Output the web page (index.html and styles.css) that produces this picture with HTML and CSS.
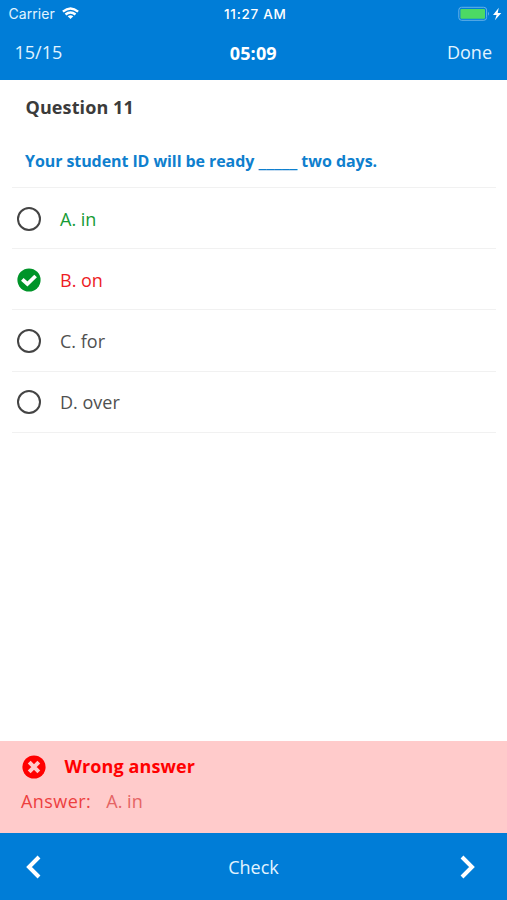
FILE: index.html
```html
<!DOCTYPE html>
<html lang="en">
<head>
<meta charset="utf-8">
<title>Question 11</title>
<link rel="stylesheet" href="styles.css">
</head>
<body>
<div class="app">
  <header class="top">
    <div class="status">
      <div class="carrier"><span>Carrier</span>
        <svg class="wifi" viewBox="0 0 17 12" width="17" height="12" fill="none" stroke="#fff" stroke-width="2.400"><path d="M.9 4.600Q8.500-1.800 16.100 4.600M3.500 7.500Q8.500 3.300 13.500 7.500"/><path d="M5.700 9.300Q8.500 7 11.300 9.300L8.500 12Z" fill="#fff" stroke="none"/></svg>
      </div>
      <div class="clock">11:27 AM</div>
      <div class="power">
        <svg viewBox="0 0 44 16" width="44" height="16"><rect x=".8" y="1.300" width="27.800" height="13" rx="2.800" fill="none" stroke="#65b1e9"/><rect x="2.400" y="2.900" width="24.600" height="9.800" rx="1" fill="#4cd964"/><path d="M30 5.800Q32 7.800 30 9.800Z" fill="#65b1e9"/><path d="M40.800 1.800L35 8.900H38.600L36.900 14.200L43.300 7H39.700Z" fill="#fff"/></svg>
      </div>
    </div>
    <nav class="nav"><span class="count">15/15</span><strong class="timer">05:09</strong><span class="done">Done</span></nav>
  </header>
  <main class="content">
    <h1 class="title">Question 11</h1>
    <p class="prompt"><span class="lead">Your student ID will be ready</span> <span class="blank">_____</span> two days.</p>
    <ul class="options">
      <li class="option correct"><span class="radio"></span><span class="label">A. in</span></li>
      <li class="option wrong"><svg class="check" viewBox="0 0 24 24" width="24" height="24"><circle cx="12" cy="12" r="11.600" fill="#009429"/><path d="M5.300 11.400L10.400 16L18.600 8" fill="none" stroke="#fff" stroke-width="3.800"/></svg><span class="label">B. on</span></li>
      <li class="option"><span class="radio"></span><span class="label">C. for</span></li>
      <li class="option"><span class="radio"></span><span class="label">D. over</span></li>
    </ul>
  </main>
  <section class="result">
    <div class="verdict"><svg viewBox="0 0 24 24" width="24" height="24"><circle cx="12" cy="12" r="11.600" fill="#f00"/><path d="M7.200 7.200L16.800 16.800M16.800 7.200L7.200 16.800" stroke="#ffcbcb" stroke-width="4"/></svg><strong class="verdict-text">Wrong answer</strong></div>
    <div class="answer"><span class="answer-key">Answer:</span><span class="answer-value">A. in</span></div>
  </section>
  <footer class="bottom">
    <svg viewBox="0 0 16 24" width="16" height="24" fill="none" stroke="#fff" stroke-width="4"><path d="M14 2L4 12L14 22"/></svg>
    <span class="action">Check</span>
    <svg class="next" viewBox="0 0 16 24" width="16" height="24" fill="none" stroke="#fff" stroke-width="4"><path d="M2 2L12 12L2 22"/></svg>
  </footer>
</div>
</body>
</html>
```
FILE: styles.css
```css
* { box-sizing: border-box; }
body { margin: 0; }
svg { display: block; flex: none; }
.app {
  display: flex;
  flex-direction: column;
  height: 900px;
  background: #fff;
  font: 18px/24px "Open Sans", "Noto Sans", sans-serif;
  color: #505050;
}
.top { height: 80px; background: #007dd7; color: #e2f4ff; }
.status, .nav { display: grid; grid-template-columns: 1fr auto 1fr; align-items: center; }
.status {
  height: 27px;
  padding: 0 5px 0 8.5px;
  font: 14px/20px Inter, sans-serif;
}
.carrier { display: flex; align-items: center; gap: 7px; letter-spacing: .05px; }
.wifi { margin-top: -1px; }
.clock { font-weight: 500; font-size: 13.5px; letter-spacing: .7px; color: #fff; }
.power { justify-self: end; }
.nav { height: 51px; padding: 0 15px 0 14.5px; }
.count, .done { margin-top: -1px; }
.timer { color: #fff; letter-spacing: .15px; }
.done { justify-self: end; }
.content { flex: 1; }
.title { margin: 15px 0 0 25.5px; font-size: 18px; line-height: 24px; font-weight: 700; letter-spacing: .1px; color: #3b3b3b; }
.prompt { margin: 30px 0 0 25px; font-size: 16px; line-height: 24px; font-weight: 700; letter-spacing: -.04px; color: #0f7fce; }
.lead { letter-spacing: -.08px; }
.blank { font-size: 19px; line-height: 1; }
.options { list-style: none; margin: 14px 11px 0 12px; padding: 0; border-top: 1px solid #f1f1f1; }
.option { display: flex; align-items: center; height: 61.2px; padding: 1px 0 0 5px; gap: 19px; border-bottom: 1px solid #f1f1f1; }
.radio { width: 24px; height: 24px; border: 2px solid #444; border-radius: 50%; }
.correct .label { color: #169b35; }
.wrong .label { color: #ed1c24; }
.result { height: 92px; padding: 14px 21px; background: #ffcbcb; }
.verdict { display: flex; align-items: center; gap: 18.5px; padding-left: 1px; color: #f00; }
.verdict-text { margin-top: -2px; letter-spacing: .1px; }
.answer { display: flex; gap: 15px; margin-top: 10px; color: #ed3f3f; }
.answer-key { font-weight: 500; letter-spacing: .45px; }
.answer-value { color: #e56464; }
.bottom { display: grid; grid-template-columns: 1fr auto 1fr; align-items: center; height: 67px; padding: 0 31px 0 25px; background: #007dd7; color: #e2f4ff; }
.action { margin-left: 6px; }
.next { justify-self: end; }
```
